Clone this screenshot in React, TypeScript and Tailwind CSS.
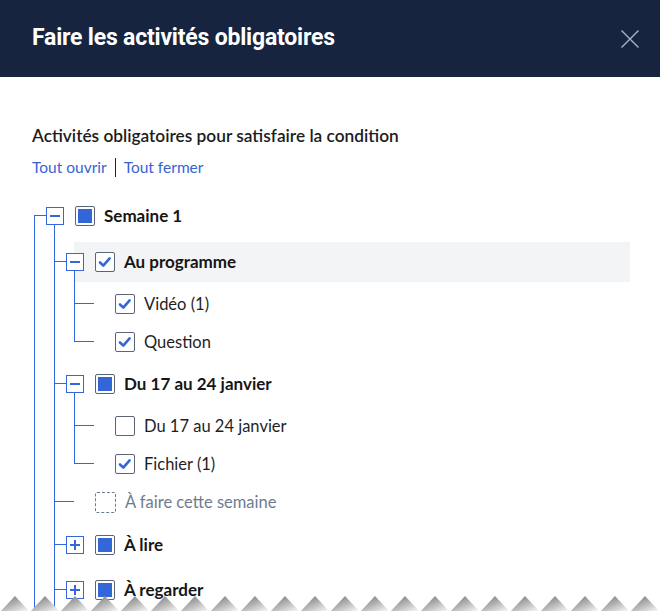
import React from "react";

type Check = "checked" | "indet" | "empty" | "dashed";
type Kind = "open" | "closed" | "leaf";

interface Row {
  guides: boolean[];
  elbowTop: boolean;
  elbowBottom: boolean;
  kind: Kind;
  check: Check;
  label: string;
  bold?: boolean;
  muted?: boolean;
  highlight?: boolean;
  h: string; // row height class
  c: "20" | "19"; // center offset
}

const rows: Row[] = [
  { guides: [], elbowTop: false, elbowBottom: true, kind: "open", check: "indet", label: "Semaine 1", bold: true, h: "h-[46px]", c: "20" },
  { guides: [true], elbowTop: true, elbowBottom: true, kind: "open", check: "checked", label: "Au programme", bold: true, highlight: true, h: "h-[43px]", c: "20" },
  { guides: [true, true], elbowTop: true, elbowBottom: true, kind: "leaf", check: "checked", label: "Vidéo (1)", h: "h-[38px]", c: "19" },
  { guides: [true, true], elbowTop: true, elbowBottom: false, kind: "leaf", check: "checked", label: "Question", h: "h-[41px]", c: "19" },
  { guides: [true], elbowTop: true, elbowBottom: true, kind: "open", check: "indet", label: "Du 17 au 24 janvier", bold: true, h: "h-[43px]", c: "20" },
  { guides: [true, true], elbowTop: true, elbowBottom: true, kind: "leaf", check: "empty", label: "Du 17 au 24 janvier", h: "h-[38px]", c: "19" },
  { guides: [true, true], elbowTop: true, elbowBottom: false, kind: "leaf", check: "checked", label: "Fichier (1)", h: "h-[38px]", c: "19" },
  { guides: [true], elbowTop: true, elbowBottom: true, kind: "leaf", check: "dashed", label: "À faire cette semaine", muted: true, h: "h-[42px]", c: "19" },
  { guides: [true], elbowTop: true, elbowBottom: true, kind: "closed", check: "indet", label: "À lire", bold: true, h: "h-[45px]", c: "20" },
  { guides: [true], elbowTop: true, elbowBottom: true, kind: "closed", check: "indet", label: "À regarder", bold: true, h: "h-[44px]", c: "20" },
];

const LINE = "border-[#3467dc]";

function CheckBox({ check }: { check: Check }) {
  if (check === "dashed") {
    return <div className="w-[21px] h-[21px] shrink-0 rounded-[2px] border border-dashed border-[#6b7a90] bg-white" />;
  }
  return (
    <div className="w-[20px] h-[20px] shrink-0 rounded-[2px] border border-[#5b6577] bg-white flex items-center justify-center">
      {check === "indet" && <div className="w-[14px] h-[14px] bg-[#3366d6]" />}
      {check === "checked" && (
        <svg width="18" height="18" viewBox="0 0 18 18">
          <path d="M4 9.5 L7.3 12.6 L13.6 5.4" fill="none" stroke="#3366d6" strokeWidth="2.6" strokeLinecap="round" strokeLinejoin="round" />
        </svg>
      )}
    </div>
  );
}

function Toggle({ open }: { open: boolean }) {
  return (
    <div className="ml-[2px] w-[18px] h-[18px] border border-[#3467dc] bg-white flex items-center justify-center shrink-0">
      <svg width="12" height="12" viewBox="0 0 12 12">
        <rect x="1" y="5" width="10" height="2" fill="#3467dc" />
        {!open && <rect x="5" y="1" width="2" height="10" fill="#3467dc" />}
      </svg>
    </div>
  );
}

function TreeRow({ r }: { r: Row }) {
  const topH = r.c === "20" ? "h-[20px]" : "h-[19px]";
  const padT = r.c === "20" ? "h-[11px]" : "h-[10px]";
  const contentH = r.c === "20" ? "h-[40px]" : "h-[38px]";
  const isParent = r.kind !== "leaf";
  return (
    <div
      className={`flex ${r.h} ${
        r.highlight
          ? "bg-[linear-gradient(to_right,transparent_50px,#f3f4f6_50px)] bg-no-repeat bg-[length:100%_40px]"
          : ""
      }`}
    >
      {r.guides.map((g, i) => (
        <div key={i} className="w-5 shrink-0">
          {g && <div className={`ml-[10px] h-full border-l ${LINE}`} />}
        </div>
      ))}
      {/* elbow */}
      <div className="w-5 shrink-0 flex flex-col">
        <div
          className={`ml-[10px] ${topH} ${isParent ? "w-[12px]" : "w-[10px]"} border-b ${
            r.elbowTop ? "border-l" : ""
          } ${LINE}`}
        />
        <div className={`ml-[10px] flex-1 ${r.elbowBottom ? "border-l" : ""} ${LINE}`} />
      </div>
      {/* toggle / connector */}
      {r.kind === "leaf" ? (
        <div className="w-5 shrink-0">
          <div className={`${topH} w-[10px] border-b ${LINE}`} />
        </div>
      ) : (
        <div className="w-5 shrink-0 flex flex-col">
          <div className={padT} />
          <Toggle open={r.kind === "open"} />
          {r.kind === "open" && <div className={`ml-[10px] flex-1 border-l ${LINE}`} />}
        </div>
      )}
      <div className={`flex items-center ${contentH} ml-[11px]`}>
        <CheckBox check={r.check} />
        <span
          className={`ml-[9px] whitespace-nowrap ${
            r.bold
              ? "text-[17px] font-bold text-[#161616]"
              : r.muted
              ? "text-[16.5px] text-[#6e7c91]"
              : "text-[16.5px] text-[#1f1f1f]"
          }`}
        >
          {r.label}
        </span>
      </div>
    </div>
  );
}

export default function App() {
  return (
    <div className="relative w-[660px] h-[614px] overflow-hidden bg-white" style={{ fontFamily: "Lato, 'Noto Sans', sans-serif" }}>
      <header className="h-[77px] bg-[#16243f] flex items-center justify-between pl-8 pr-[20px]">
        <h1 className="text-white text-[23px] font-bold tracking-[-0.2px]" style={{ fontFamily: "Roboto, 'Liberation Sans', sans-serif" }}>
          Faire les activités obligatoires
        </h1>
        <svg width="20" height="20" viewBox="0 0 20 20" className="mt-[1px]">
          <path d="M1.5 1.5 L18.5 18.5 M18.5 1.5 L1.5 18.5" stroke="#aab3c2" strokeWidth="1.4" />
        </svg>
      </header>
      <main className="px-8 pt-[47px]">
        <h2 className="text-[17.3px] leading-6 font-semibold text-[#1c1c1c]">
          Activités obligatoires pour satisfaire la condition
        </h2>
        <div className="mt-[9px] flex items-center text-[15.5px] leading-5 text-[#3563d6]">
          <span>Tout ouvrir</span>
          <span className="mx-[8px] w-px h-[19px] bg-[#222]" />
          <span>Tout fermer</span>
        </div>
        <div className="mt-[19px] -ml-2 -mr-[2px]">
          {rows.map((r, i) => (
            <TreeRow key={i} r={r} />
          ))}
        </div>
      </main>
      <svg className="absolute left-0 bottom-0" width="660" height="19" viewBox="0 0 660 19">
        <defs>
          <linearGradient id="tooth" x1="0" y1="0" x2="0.8" y2="1">
            <stop offset="0" stopColor="#6e6e6e" />
            <stop offset="0.55" stopColor="#b5b5b5" />
            <stop offset="1" stopColor="#f4f4f4" />
          </linearGradient>
          <pattern id="teeth" x="0" y="0" width="30" height="19" patternUnits="userSpaceOnUse">
            <polygon points="0,17 15,1 30,17" fill="url(#tooth)" />
          </pattern>
        </defs>
        <rect x="0" y="0" width="660" height="17" fill="url(#teeth)" />
        <rect x="0" y="16" width="660" height="3" fill="#ffffff" />
      </svg>
    </div>
  );
}
